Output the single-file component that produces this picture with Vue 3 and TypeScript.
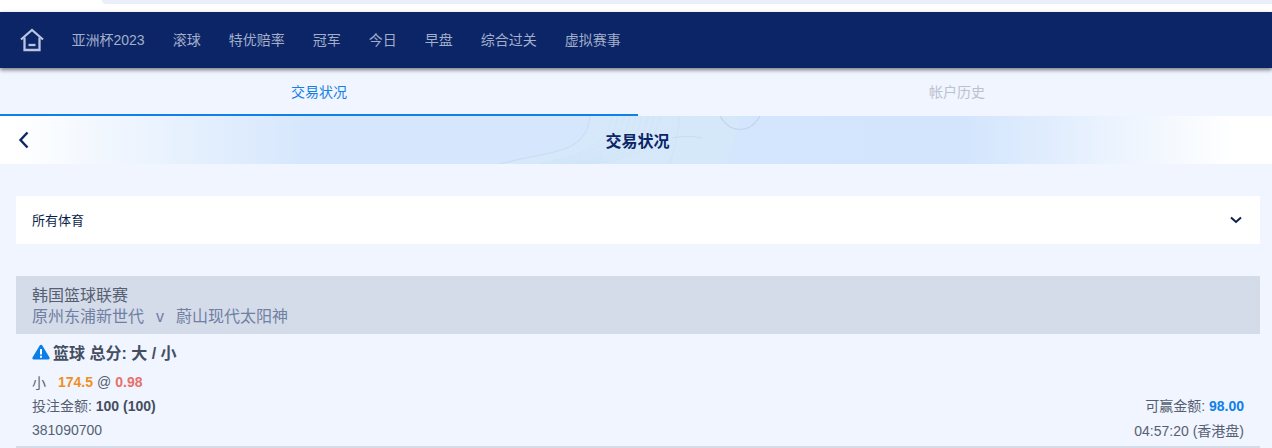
<script setup lang="ts">
const navItems = ["亚洲杯2023", "滚球", "特优赔率", "冠军", "今日", "早盘", "综合过关", "虚拟赛事"];

const bet = {
  league: "韩国篮球联赛",
  home: "原州东浦新世代",
  away: "蔚山现代太阳神",
  market: "篮球 总分: 大 / 小",
  side: "小",
  line: "174.5",
  odds: "0.98",
  stake: "100 (100)",
  win: "98.00",
  id: "381090700",
  time: "04:57:20 (香港盘)",
};

// faint contour lines behind the banner title
const contours = Array.from({ length: 9 }, (_, i) => {
  const o = i * 6;
  return `M${100 + o} 48C${150 + o} ${36 + i} ${166 + o} 30 ${172 + o} 0`;
});
</script>

<template>
  <div class="page">
    <div class="topstrip"><div class="search"></div></div>

    <nav class="nav">
      <svg class="home" viewBox="0 0 24 24" width="24" height="24" fill="none" stroke="#b9c4e2" stroke-width="2.3">
        <path d="M1 11.500 12 2l11 9.500" />
        <path d="M4.500 9.500V22h15V9.500" />
        <path d="M8.500 17h7" />
      </svg>
      <a v-for="item in navItems" :key="item" class="nav__item">{{ item }}</a>
    </nav>

    <div class="tabs">
      <div class="tab tab--on">交易状况</div>
      <div class="tab">帐户历史</div>
    </div>

    <div class="banner">
      <svg class="banner__lines" viewBox="0 0 400 48" width="400" height="48" fill="none">
        <path d="M60 48C110 34 146 40 150 0H300C296 20 292 36 286 48Z" fill="#d6ecf7" opacity=".45" />
        <path d="M60 48C110 34 146 40 150 0" stroke="#c9dcf0" stroke-width="1" />
        <path v-for="d in contours" :key="d" :d="d" stroke="#c4dcf0" stroke-width=".6" opacity=".5" />
        <path d="M240 0C238 18 234 34 230 48" stroke="#cfe4f0" stroke-width="1" />
        <path d="M232 22C244 20 252 20 262 22" stroke="#c6deea" stroke-width="1" />
        <path d="M280 0C290 18 310 18 320 0" stroke="#c3d6e6" stroke-width="1.200" />
      </svg>
      <svg class="back" viewBox="0 0 12 18" width="12" height="18" fill="none" stroke="#0b2566" stroke-width="2.400">
        <path d="M9.500 1.500 2.500 9l7 7.500" />
      </svg>
      <div class="banner__title">交易状况</div>
    </div>

    <div class="filter">
      <span class="filter__label">所有体育</span>
      <svg viewBox="0 0 12 8" width="12" height="8" fill="none" stroke="#0b1f4d" stroke-width="2">
        <path d="M1 1.500 6 6l5-4.500" />
      </svg>
    </div>

    <section class="card">
      <header class="card__head">
        <div class="league">{{ bet.league }}</div>
        <div class="teams">
          <span>{{ bet.home }}</span><span class="vs">v</span><span>{{ bet.away }}</span>
        </div>
      </header>
      <div class="card__body">
        <div class="market">
          <svg viewBox="0 0 18 16" width="18" height="16">
            <path d="M9 .8c.5 0 1 .3 1.300.8l7.200 12c.5.9-.1 2-1.200 2H1.700c-1.100 0-1.700-1.100-1.200-2l7.200-12C8 1.100 8.500.8 9 .8Z" fill="#0a7fe8" />
            <path d="M8 5h2v5.500H8zM8 11.700h2v2H8z" fill="#fff" />
          </svg>
          <span>{{ bet.market }}</span>
        </div>
        <div class="line">
          <span class="side">{{ bet.side }}</span>
          <b class="orange">{{ bet.line }}</b>
          <span class="at">@</span>
          <b class="red">{{ bet.odds }}</b>
        </div>
        <div class="row row--stake">
          <span>投注金额: <b>{{ bet.stake }}</b></span>
          <span>可赢金额: <b class="blue">{{ bet.win }}</b></span>
        </div>
        <div class="row">
          <span>{{ bet.id }}</span>
          <span>{{ bet.time }}</span>
        </div>
      </div>
    </section>
  </div>
</template>

<style scoped>
.page {
  height: 448px;
  overflow: hidden;
  background: #f0f5ff;
  font-family: "Liberation Sans", "Noto Sans CJK SC", sans-serif;
  color: #565f72;
}
.topstrip {
  height: 12px;
  background: #fff;
}
.search {
  height: 4px;
  margin-left: 102px;
  background: #eaeef8;
  border-bottom-left-radius: 10px;
}
.nav {
  position: relative;
  height: 56px;
  display: flex;
  align-items: center;
  padding-left: 20px;
  background: #0b2566;
  box-shadow: 0 2px 4px rgba(0, 0, 0, 0.5);
}
.home {
  margin-right: 27.500px;
}
.nav__item {
  margin-right: 28px;
  padding-bottom: 3px;
  font-size: 14px;
  color: #a3aecb;
}
.tabs {
  height: 48px;
  display: flex;
}
.tab {
  flex: 0 0 638px;
  box-sizing: border-box;
  padding-bottom: 3px;
  display: flex;
  align-items: center;
  justify-content: center;
  font-size: 14px;
  color: #bcc1ce;
}
.tab + .tab {
  padding-left: 4px;
  flex-basis: 634px;
}
.tab--on {
  padding-bottom: 1px;
  color: #1580e3;
  border-bottom: 2px solid #0f80e8;
}
.banner {
  position: relative;
  height: 48px;
  display: flex;
  align-items: center;
  justify-content: center;
  padding-left: 3px;
  background: linear-gradient(90deg, #fff 1%, #eef5fe 10%, #d6e7fd 24%, #d3e5fd 76%, #fff 97%);
  overflow: hidden;
}
.banner__lines {
  position: absolute;
  left: 440px;
  top: 0;
}
.back {
  position: absolute;
  left: 18px;
  top: 15px;
}
.banner__title {
  position: relative;
  font-size: 16px;
  font-weight: 700;
  color: #0b2566;
}
.filter {
  height: 48px;
  margin: 32px 12px 32px 16px;
  padding: 0 18px 0 16px;
  display: flex;
  align-items: center;
  justify-content: space-between;
  background: #fff;
  font-size: 13px;
  color: #0b1f4d;
}
.filter__label {
  padding-bottom: 2px;
}
.card {
  margin: 0 12px 0 16px;
  border-bottom: 2px solid #d4dbe9;
}
.card__head {
  height: 58px;
  padding: 9px 16px 0;
  box-sizing: border-box;
  background: #d4dbe9;
  font-size: 16px;
  line-height: 21px;
}
.league {
  color: #565f72;
}
.teams {
  color: #6f80a3;
}
.vs {
  margin: 0 12px;
}
.card__body {
  height: 112px;
  padding: 0 16px;
  box-sizing: border-box;
}
.market {
  height: 40px;
  padding-bottom: 4px;
  box-sizing: border-box;
  display: flex;
  align-items: center;
  gap: 3px;
  font-size: 16px;
  font-weight: 700;
  color: #444e60;
}
.line {
  height: 20px;
  padding-bottom: 4px;
  box-sizing: border-box;
  display: flex;
  align-items: center;
  font-size: 14px;
}
.side {
  margin-right: 12px;
}
.at {
  margin: 0 4px;
}
.orange {
  color: #f0901e;
}
.red {
  color: #e8706a;
}
.row {
  height: 24px;
  box-sizing: border-box;
  display: flex;
  align-items: center;
  justify-content: space-between;
  font-size: 14px;
}
.row--stake {
  padding-bottom: 2px;
}
.row b {
  color: #444e60;
}
.row .blue {
  color: #0f80e8;
}
</style>

<style>
body {
  background: #f0f5ff;
}
</style>
